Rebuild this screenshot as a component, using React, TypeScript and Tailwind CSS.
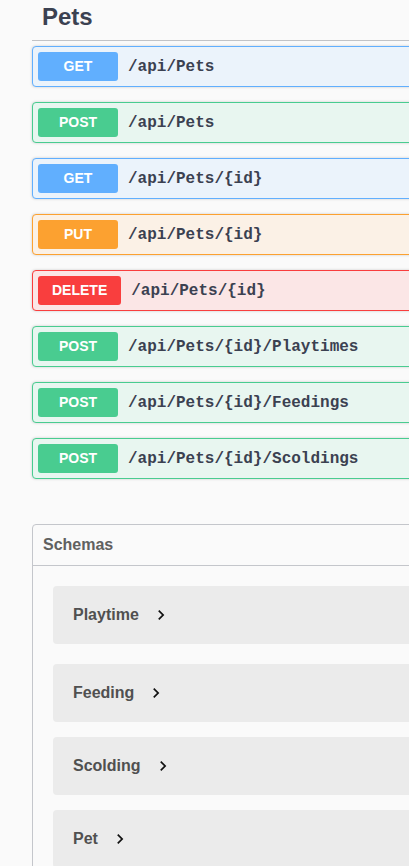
import React from 'react';

type Op = {
  method: 'GET' | 'POST' | 'PUT' | 'DELETE';
  path: string;
};

const ops: Op[] = [
  { method: 'GET', path: '/api/Pets' },
  { method: 'POST', path: '/api/Pets' },
  { method: 'GET', path: '/api/Pets/{id}' },
  { method: 'PUT', path: '/api/Pets/{id}' },
  { method: 'DELETE', path: '/api/Pets/{id}' },
  { method: 'POST', path: '/api/Pets/{id}/Playtimes' },
  { method: 'POST', path: '/api/Pets/{id}/Feedings' },
  { method: 'POST', path: '/api/Pets/{id}/Scoldings' },
];

const rowStyles: Record<Op['method'], { row: string; badge: string }> = {
  GET: { row: 'border-[#61affe] bg-[#ebf3fb]', badge: 'bg-[#61affe]' },
  POST: { row: 'border-[#49cc90] bg-[#e8f6f0]', badge: 'bg-[#49cc90]' },
  PUT: { row: 'border-[#fca130] bg-[#fbf1e6]', badge: 'bg-[#fca130]' },
  DELETE: { row: 'border-[#f93e3e] bg-[#fbe6e6]', badge: 'bg-[#f93e3e]' },
};

const schemas = ['Playtime', 'Feeding', 'Scolding', 'Pet'];

const Chevron: React.FC = () => (
  <svg width="20" height="20" viewBox="0 0 24 24" className="ml-[12px] shrink-0">
    <path d="M10 6L8.59 7.41 13.17 12l-4.58 4.59L10 18l6-6z" fill="#111" />
  </svg>
);

const OpRow: React.FC<{ op: Op }> = ({ op }) => {
  const s = rowStyles[op.method];
  return (
    <div
      className={`flex items-center border rounded-[4px] p-[5px] mb-[15px] shadow-[0_0_3px_rgba(0,0,0,0.19)] ${s.row}`}
    >
      <span
        className={`min-w-[80px] h-[29px] px-[14px] flex items-center justify-center rounded-[3px] text-white text-[14px] font-bold ${s.badge}`}
        style={{ fontFamily: '"Liberation Sans", Arial, sans-serif' }}
      >
        {op.method}
      </span>
      <span
        className="px-[10px] text-[16px] font-bold text-[#3b4151]"
        style={{ fontFamily: '"Liberation Mono", "Courier New", monospace' }}
      >
        {op.path}
      </span>
    </div>
  );
};

export default function App() {
  return (
    <div
      className="min-h-screen w-full overflow-hidden bg-[#fafafa] text-[#3b4151]"
      style={{ fontFamily: '"Liberation Sans", Arial, sans-serif' }}
    >
      <div className="ml-[32px] w-[720px]">
        {/* Tag header */}
        <div className="h-[41px] border-b border-[#c2c3c6] pl-[10px] flex items-center">
          <h3 className="text-[24px] font-bold text-[#3b4151] leading-none -mt-[6px]">Pets</h3>
        </div>

        {/* Operations */}
        <div className="mt-[5px]">
          {ops.map((op, i) => (
            <OpRow key={i} op={op} />
          ))}
        </div>

        {/* Schemas */}
        <section className="mt-[45px] border border-[#c4c6cb] rounded-tl-[4px]">
          <div className="h-[41px] flex items-center pl-[10px] border-b border-[#c4c6cb]">
            <h4 className="text-[16px] font-bold text-[#606060]">Schemas</h4>
          </div>
          <div className="pl-[20px] pt-[20px] pb-[20px] flex flex-col gap-[15px]">
            {schemas.map((name, i) => (
              <div
                key={name}
                className={`h-[58px] bg-[#ebebeb] rounded-[4px] flex items-center pl-[20px] ${i === 0 ? 'mb-[5px]' : ''}`}
              >
                <span className="text-[16px] font-bold text-[#505050]">{name}</span>
                <Chevron />
              </div>
            ))}
          </div>
        </section>
      </div>
    </div>
  );
}
